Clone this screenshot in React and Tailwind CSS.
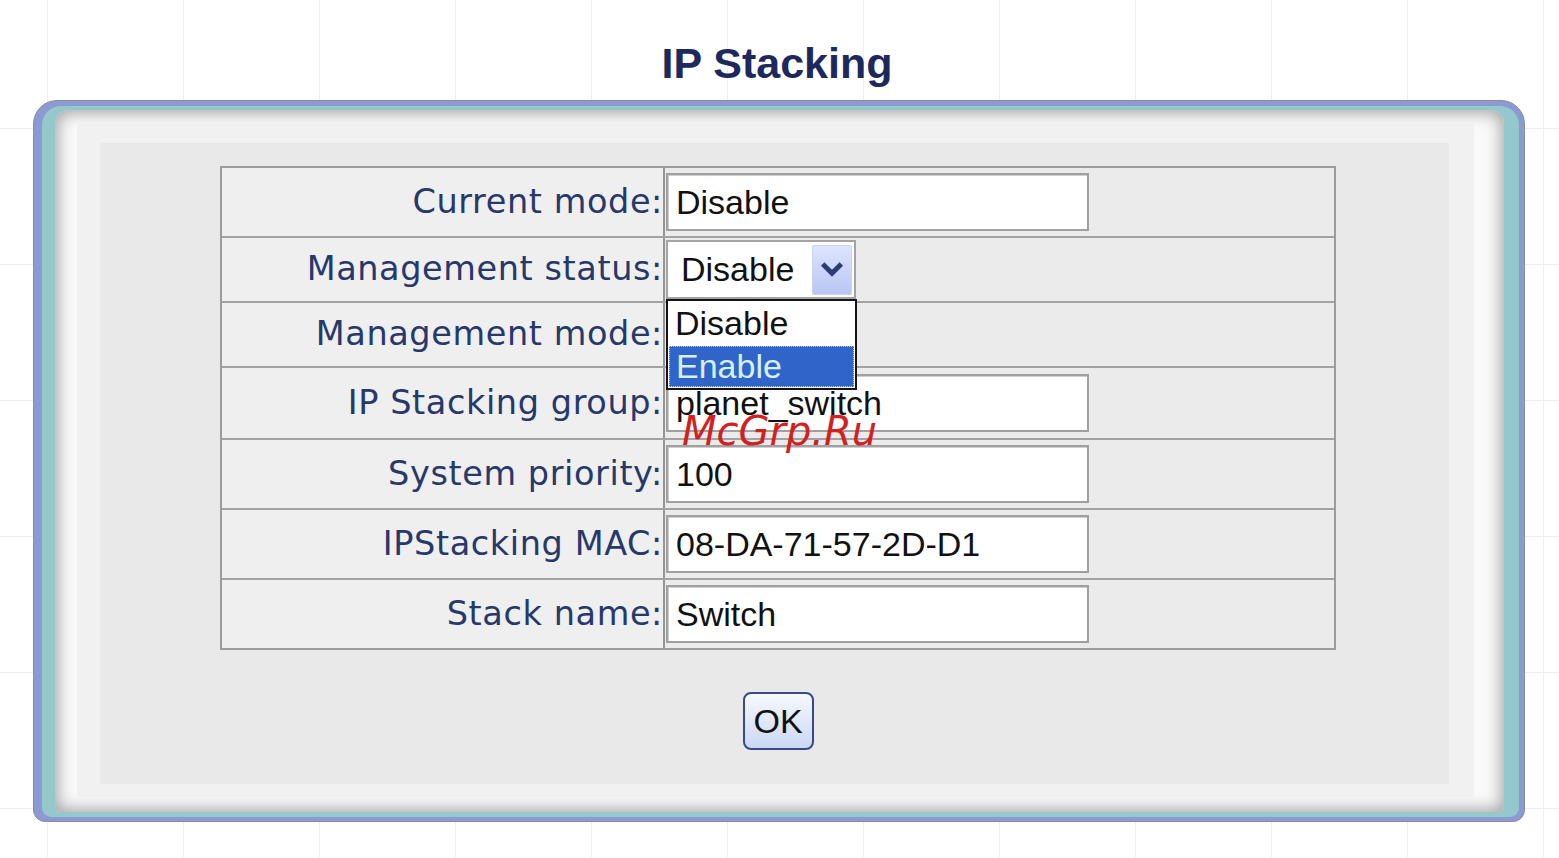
import React from 'react';

const LABEL_FONT = "font-['DejaVu_Sans',Verdana,sans-serif]";
const VALUE_FONT = "font-['Liberation_Sans',Arial,sans-serif]";

const ROWS = [
  { label: 'Current mode:', h: 'h-[68px]', kind: 'input', value: 'Disable' },
  { label: 'Management status:', h: 'h-[65px]', kind: 'select', open: true },
  { label: 'Management mode:', h: 'h-[65px]', kind: 'select' },
  { label: 'IP Stacking group:', h: 'h-[72px]', kind: 'input', value: 'planet_switch' },
  { label: 'System priority:', h: 'h-[70px]', kind: 'input', value: '100' },
  { label: 'IPStacking MAC:', h: 'h-[70px]', kind: 'input', value: '08-DA-71-57-2D-D1' },
  { label: 'Stack name:', h: 'h-[70px]', kind: 'input', value: 'Switch' },
];

function Chevron() {
  return (
    <svg width="26" height="26" viewBox="0 0 24 24" fill="none">
      <path d="M5 8l7 7 7-7" stroke="#2d3c70" strokeWidth="4.5" strokeLinecap="square" />
    </svg>
  );
}

function SelectBox({ open }) {
  return (
    <div className="relative">
      <div className={`w-[190px] h-[59px] border-2 border-[#a3a3a3] bg-white flex items-center justify-between pl-[13px] pr-[2px] ${VALUE_FONT} text-[34px] text-[#111]`}>
        <span>Disable</span>
        <div className="w-[40px] h-[50px] rounded-[2px] bg-gradient-to-b from-[#dfe4ff] to-[#b9c6f4] border border-[#c9d2f6] flex items-center justify-center">
          <Chevron />
        </div>
      </div>
      {open && (
        <div className={`absolute left-0 top-full z-10 w-[191px] h-[91px] border-2 border-[#141414] bg-white ${VALUE_FONT} text-[34px]`}>
          <div className="h-[45px] pl-[7px] flex items-center text-[#111]">Disable</div>
          <div className="h-[41px] mx-[1px] pl-[6px] flex items-center bg-[#3164c8] text-[#d4f0f8] border border-dotted border-[#c0cdea]">
            Enable
          </div>
        </div>
      )}
    </div>
  );
}

function TextBox({ value }) {
  return (
    <div className={`w-[423px] h-[58px] border-2 border-[#a0a0a0] shadow-[inset_1px_1px_0_#d0d0d0] bg-white flex items-center pl-[8px] ${VALUE_FONT} text-[34px] text-[#111] whitespace-pre`}>
      {value}
    </div>
  );
}

export default function App() {
  return (
    <div className="relative w-[1559px] h-[858px] overflow-hidden bg-white [background-image:linear-gradient(to_right,#efefef_1px,transparent_1px),linear-gradient(to_bottom,#efefef_1px,transparent_1px)] [background-size:136px_136px] [background-position:47px_128px]">
      <h1 className={`h-[100px] pt-[39px] pr-[5px] text-center text-[43px] leading-[48px] font-bold text-[#1d295c] ${VALUE_FONT}`}>
        IP Stacking
      </h1>

      {/* frame */}
      <div className="ml-[33px] w-[1492px] h-[722px] border border-[#8a8c9c] rounded-t-[24px] rounded-b-[12px] bg-[#8c9ad4] pt-[5px] pl-[8px] pr-[5px] pb-[4px]">
        <div className="h-full rounded-t-[19px] rounded-b-[9px] bg-[#94c8cc] pt-[4px] pl-[13px] pr-[15px] pb-[5px]">
          <div className="h-full rounded-t-[14px] rounded-b-[6px] bg-[#fafafa] shadow-[inset_0_0_16px_3px_#a4a4a4] pt-[14px] pl-[22px] pr-[30px] pb-[15px]">
            <div className="h-full bg-[#f1f1f1] pt-[19px] pl-[23px] pr-[25px] pb-[13px]">
              <div className="h-full bg-[#e9e9e9] pt-[23px]">
                <div className="ml-[120px] w-[1116px] border-2 border-[#9c9c9c] bg-[#ececec]">
                  {ROWS.map((row, i) => (
                    <div key={row.label} className={`flex ${row.h} ${i > 0 ? 'border-t-2 border-[#a2a2a2]' : ''}`}>
                      <div className={`w-[443px] shrink-0 border-r-2 border-[#959595] bg-[#efefef] flex items-center justify-end pr-0 ${LABEL_FONT} text-[33.5px] tracking-[0.6px] text-[#27386a]`}>
                        {row.label}
                      </div>
                      <div className="flex-1 flex items-center pl-[1px] bg-[#ebebeb]">
                        {row.kind === 'input' ? <TextBox value={row.value} /> : <SelectBox open={row.open} />}
                      </div>
                    </div>
                  ))}
                </div>

                <div className="ml-[120px] w-[1116px] mt-[42px] flex justify-center">
                  <button className={`w-[71px] h-[58px] rounded-[8px] border-2 border-[#37498a] bg-gradient-to-b from-[#f6f9ff] to-[#cbd7f4] flex items-center justify-center ${VALUE_FONT} text-[34px] text-[#111]`}>
                    OK
                  </button>
                </div>
              </div>
            </div>
          </div>
        </div>
      </div>

      {/* watermark */}
      <div className={`absolute left-[682px] top-[411px] z-20 leading-none italic text-[40px] text-[#d21f1f] ${LABEL_FONT}`}>
        McGrp.Ru
      </div>
    </div>
  );
}
